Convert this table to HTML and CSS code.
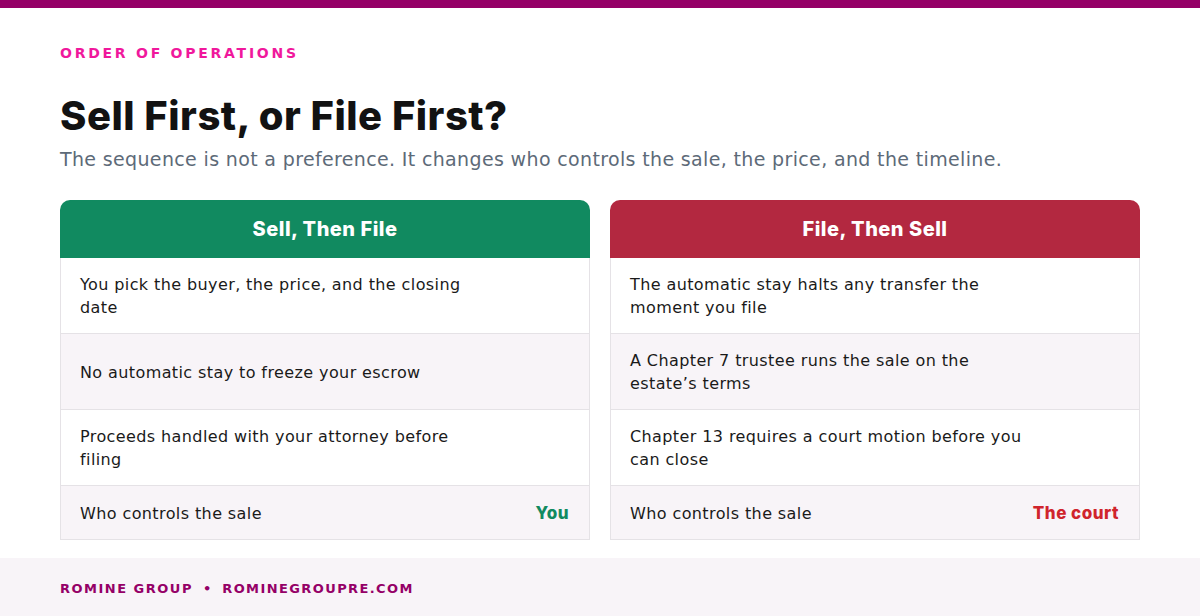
FILE: index.html
```html
<!DOCTYPE html>
<html lang="en">
<head>
<meta charset="utf-8">
<title>Sell First, or File First?</title>
<link rel="stylesheet" href="styles.css">
</head>
<body>
<div class="topbar"></div>
<main class="content">
  <div class="eyebrow">ORDER OF OPERATIONS</div>
  <h1 class="title">Sell First, or File First?</h1>
  <p class="subtitle">The sequence is not a preference. It changes who controls the sale, the price, and the timeline.</p>
  <div class="cards">
    <section class="card">
      <div class="card-head green">Sell, Then File</div>
      <div class="row"><span class="label">You pick the buyer, the price, and the closing date</span></div>
      <div class="row alt"><span class="label">No automatic stay to freeze your escrow</span></div>
      <div class="row"><span class="label">Proceeds handled with your attorney before filing</span></div>
      <div class="row alt last"><span class="label">Who controls the sale</span><span class="value green-text">You</span></div>
    </section>
    <section class="card">
      <div class="card-head red">File, Then Sell</div>
      <div class="row"><span class="label">The automatic stay halts any transfer the moment you file</span></div>
      <div class="row alt"><span class="label">A Chapter 7 trustee runs the sale on the estate’s terms</span></div>
      <div class="row"><span class="label">Chapter 13 requires a court motion before you can close</span></div>
      <div class="row alt last"><span class="label">Who controls the sale</span><span class="value red-text">The court</span></div>
    </section>
  </div>
</main>
<footer class="footer"><span>ROMINE GROUP</span><span class="dot">•</span><span class="site">ROMINEGROUPRE.COM</span></footer>
</body>
</html>
```
FILE: styles.css
```css
* { box-sizing: border-box; }
html, body { margin: 0; padding: 0; }
body {
  width: 1200px;
  height: 616px;
  overflow: hidden;
  background: #ffffff;
  font-family: "DejaVu Sans", sans-serif;
  color: #1a1a1a;
}
.topbar { height: 8px; background: #950067; }
.content { padding: 36px 60px 0; height: 550px; }
.eyebrow {
  font-size: 14px;
  font-weight: 700;
  letter-spacing: 2.75px;
  color: #f0189c;
  line-height: 18px;
}
.title {
  margin: 30px 0 0;
  font-family: "Inter", "DejaVu Sans", sans-serif;
  font-size: 40px;
  font-weight: 800;
  line-height: 48px;
  letter-spacing: 0.5px;
  color: #121212;
}
.subtitle {
  margin: 7px 0 0;
  font-size: 19px;
  line-height: 24px;
  letter-spacing: 0.35px;
  color: #5d6a78;
}
.cards {
  margin-top: 29px;
  display: grid;
  grid-template-columns: 530px 530px;
  gap: 20px;
}
.card { display: flex; flex-direction: column; }
.card-head {
  height: 58px;
  border-radius: 10px 10px 0 0;
  color: #ffffff;
  font-family: "Inter", "DejaVu Sans", sans-serif;
  font-size: 20px;
  font-weight: 800;
  letter-spacing: 0.5px;
  display: flex;
  align-items: center;
  justify-content: center;
}
.green { background: #118a60; }
.red { background: #b32840; }
.row {
  height: 76px;
  display: flex;
  align-items: center;
  justify-content: space-between;
  padding: 1px 20px 0 19px;
  border: 1px solid #e5e2e6;
  border-top: none;
  background: #ffffff;
  font-size: 16px;
  line-height: 23px;
  letter-spacing: 0.4px;
}
.row.alt { background: #f8f4f8; }
.row.last { height: 54px; }
.label { width: 396px; }
.row.last .label { width: auto; }
.value {
  font-family: "Inter", "DejaVu Sans", sans-serif;
  font-weight: 800;
  font-size: 17px;
  letter-spacing: 0.5px;
}
.green-text { color: #118a60; }
.red-text { color: #d0242c; }
.footer {
  height: 58px;
  background: #f8f4f8;
  padding: 3px 60px 0;
  display: flex;
  align-items: center;
  font-size: 13px;
  font-weight: 700;
  letter-spacing: 1.5px;
  color: #950067;
}
.site { letter-spacing: 1.4px; }
.dot { margin: 0 11px 0 10px; letter-spacing: 0; }
```
